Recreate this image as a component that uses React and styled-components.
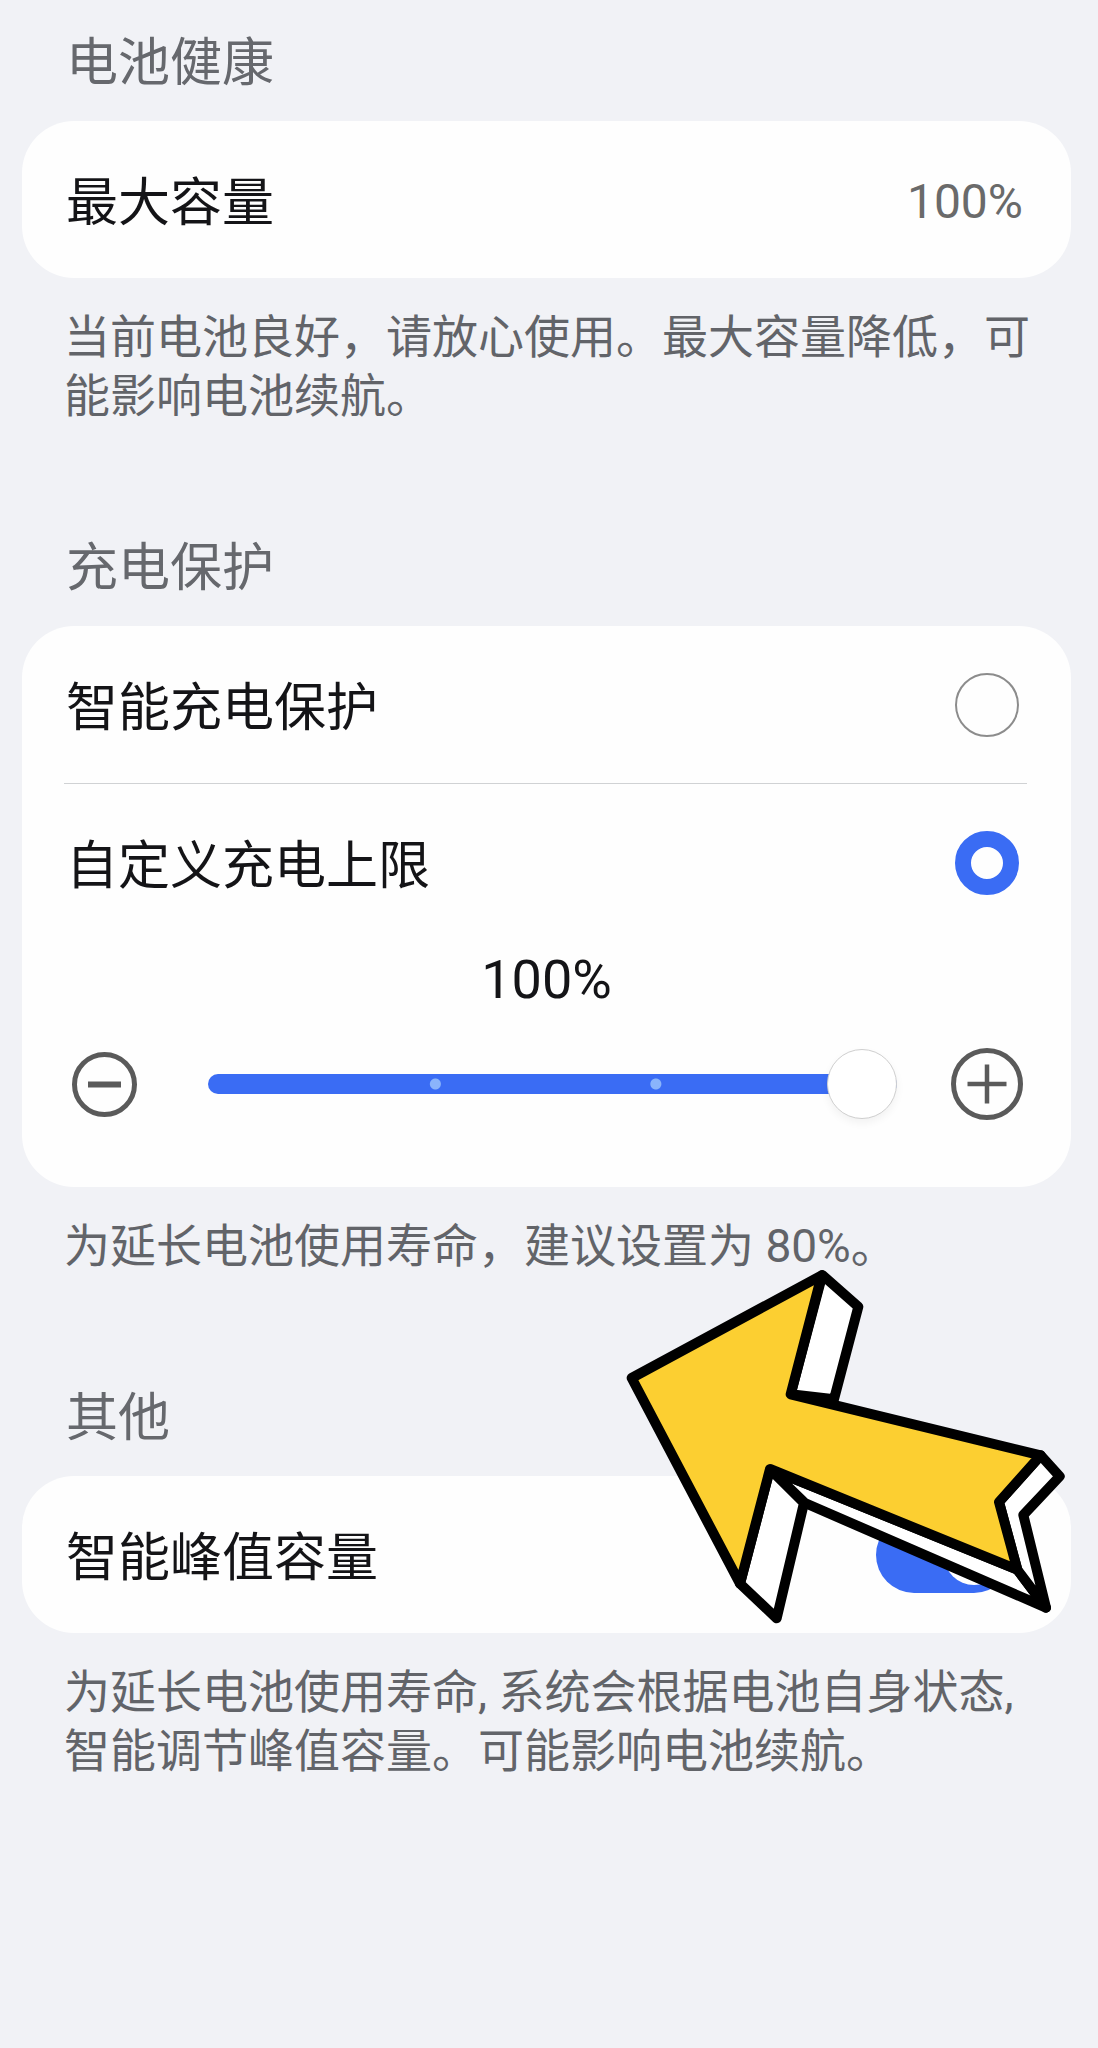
import React from "react";
import styled, { createGlobalStyle } from "styled-components";

const GlobalStyle = createGlobalStyle`
  * {
    box-sizing: border-box;
  }

  body {
    margin: 0;
    background: #f1f2f6;
    font-family: Roboto, "Noto Sans CJK SC", sans-serif;
  }
`;

const Page = styled.main`
  min-height: 100vh;
  padding: 28px 27px 64px 22px;
  display: flex;
  flex-direction: column;
  gap: 107px;
  overflow: hidden;
`;

const Section = styled.section`
  display: flex;
  flex-direction: column;
`;

const Heading = styled.h2`
  margin: 0 0 21px;
  padding: 0 44px;
  font-size: 52px;
  font-weight: 400;
  line-height: 72px;
  color: #66686d;
`;

const Card = styled.div`
  position: relative;
  background: #fefefe;
  border-radius: 52px;
`;

const Row = styled.div`
  min-height: 157px;
  padding: 0 48px 0 44px;
  display: flex;
  align-items: center;
  justify-content: space-between;
`;

const Divider = styled.hr`
  height: 1px;
  margin: 0 44px 0 42px;
  border: 0;
  background: #d0d2d4;
`;

const Label = styled.label`
  flex: 1;
  padding-top: 8px;
  font-size: 52px;
  line-height: 72px;
  color: #141417;
`;

const Title = styled(Label).attrs({ as: "span" })``;

const Value = styled.span`
  padding-top: 4px;
  font-size: 48px;
  line-height: 72px;
  color: #6a6a6a;
`;

const Note = styled.p`
  margin: 30px 0 0;
  padding: 0 36px 0 42px;
  font-size: 46px;
  line-height: 59px;
  color: #626469;
`;

const Radio = styled.input`
  appearance: none;
  width: 64px;
  height: 64px;
  margin: 0 4px 0 0;
  border: 2px solid #8c8c8c;
  border-radius: 50%;

  &:checked {
    border: 16px solid #3a6cf4;
  }
`;

const Limit = styled.output`
  display: block;
  text-align: center;
  font-size: 54px;
  line-height: 78px;
  color: #141417;
`;

const SliderRow = styled.div`
  padding: 29px 48px 67px 50px;
  display: flex;
  align-items: center;
`;

const StepButton = styled.button`
  display: flex;
  padding: 0;
  border: 0;
  background: none;
  color: #5a5a5a;
`;

const Slider = styled.input`
  appearance: none;
  flex: 1;
  min-width: 0;
  height: 70px;
  margin: 0 54px 0 71px;
  background: none;

  &::-webkit-slider-runnable-track {
    height: 20px;
    border-radius: 10px;
    background:
      radial-gradient(circle at 33% 50%, #8ab4fb 5px, transparent 6px),
      radial-gradient(circle at 65% 50%, #8ab4fb 5px, transparent 6px),
      linear-gradient(
        to right,
        #3a6cf4 ${(props) => props.$filled}%,
        #e2e4e8 ${(props) => props.$filled}%
      );
  }

  &::-webkit-slider-thumb {
    appearance: none;
    width: 70px;
    height: 70px;
    margin-top: -25px;
    border: 1px solid #cfcfcf;
    border-radius: 50%;
    background: #ffffff;
    box-shadow: 0 4px 8px rgba(0, 0, 0, 0.05);
  }
`;

const Switch = styled.input`
  appearance: none;
  display: flex;
  align-items: center;
  width: 136px;
  height: 76px;
  margin: 0 11px 0 0;
  padding: 0 8px;
  border-radius: 38px;
  background: #d9dbe0;

  &::before {
    content: "";
    width: 60px;
    height: 60px;
    border-radius: 50%;
    background: #ffffff;
  }

  &:checked {
    justify-content: flex-end;
    background: #3a6cf4;
  }
`;

// lies over the card and reaches up towards the note above it
const Pointer = styled.svg`
  position: absolute;
  top: -235px;
  right: -27px;
  width: 498px;
  height: 410px;
  pointer-events: none;
`;

const MinusIcon = () => (
  <svg width="65" height="65" viewBox="0 0 65 65" fill="none" stroke="currentColor">
    <circle cx="32.5" cy="32.5" r="30" strokeWidth="5" />
    <path d="M16 32.5h33" strokeWidth="6" />
  </svg>
);

const PlusIcon = () => (
  <svg width="72" height="72" viewBox="0 0 72 72" fill="none" stroke="currentColor">
    <circle cx="36" cy="36" r="33.5" strokeWidth="5" />
    <path d="M16.5 36h39M36 16.5v39" strokeWidth="4.5" />
  </svg>
);

const Arrow = () => (
  <Pointer
    viewBox="0 0 1494 1230"
    stroke="#000000"
    strokeWidth="30"
    strokeLinejoin="round"
    strokeLinecap="round"
    aria-hidden="true"
  >
    <g fill="#ffffff">
      <path d="M667 102L775 197L702 475L572 460Z" />
      <path d="M510 684L612 786L530 1132L420 1028Z" />
      <path d="M510 684L615 786L1338 1100L1252 986Z" />
      <path d="M1322 643L1379 706L1270 822L1338 1100L1252 986L1197 783Z" />
    </g>
    <path
      fill="#fccf31"
      d="M95 411L665 103L572 460L1322 643L1197 783L1252 986L510 684L420 1028Z"
    />
  </Pointer>
);

const MIN_LIMIT = 70;
const MAX_LIMIT = 100;
const STEP = 10;

export const BatterySettings = () => {
  const [mode, setMode] = React.useState("custom");
  const [limit, setLimit] = React.useState(100);
  const [peak, setPeak] = React.useState(true);

  const changeLimit = (amount) => {
    setLimit(Math.min(MAX_LIMIT, Math.max(MIN_LIMIT, limit + amount)));
  };

  return (
    <Page>
      <Section>
        <Heading>电池健康</Heading>
        <Card>
          <Row>
            <Title>最大容量</Title>
            <Value>100%</Value>
          </Row>
        </Card>
        <Note>当前电池良好，请放心使用。最大容量降低，可能影响电池续航。</Note>
      </Section>

      <Section>
        <Heading>充电保护</Heading>
        <Card>
          <Row>
            <Label htmlFor="smart">智能充电保护</Label>
            <Radio
              id="smart"
              type="radio"
              name="mode"
              checked={mode === "smart"}
              onChange={() => setMode("smart")}
            />
          </Row>
          <Divider />
          <Row>
            <Label htmlFor="custom">自定义充电上限</Label>
            <Radio
              id="custom"
              type="radio"
              name="mode"
              checked={mode === "custom"}
              onChange={() => setMode("custom")}
            />
          </Row>
          <Limit htmlFor="limit">{limit}%</Limit>
          <SliderRow>
            <StepButton type="button" aria-label="减少" onClick={() => changeLimit(-STEP)}>
              <MinusIcon />
            </StepButton>
            <Slider
              id="limit"
              type="range"
              aria-label="充电上限"
              min={MIN_LIMIT}
              max={MAX_LIMIT}
              step={STEP}
              value={limit}
              $filled={((limit - MIN_LIMIT) / (MAX_LIMIT - MIN_LIMIT)) * 100}
              onChange={(event) => setLimit(Number(event.target.value))}
            />
            <StepButton type="button" aria-label="增加" onClick={() => changeLimit(STEP)}>
              <PlusIcon />
            </StepButton>
          </SliderRow>
        </Card>
        <Note>为延长电池使用寿命，建议设置为 80%。</Note>
      </Section>

      <Section>
        <Heading>其他</Heading>
        <Card>
          <Row>
            <Label htmlFor="peak">智能峰值容量</Label>
            <Switch
              id="peak"
              type="checkbox"
              role="switch"
              checked={peak}
              onChange={(event) => setPeak(event.target.checked)}
            />
          </Row>
          <Arrow />
        </Card>
        <Note>
          为延长电池使用寿命, 系统会根据电池自身状态, 智能调节峰值容量。可能影响电池续航。
        </Note>
      </Section>
    </Page>
  );
};

const App = () => (
  <>
    <GlobalStyle />
    <BatterySettings />
  </>
);

export default App;
